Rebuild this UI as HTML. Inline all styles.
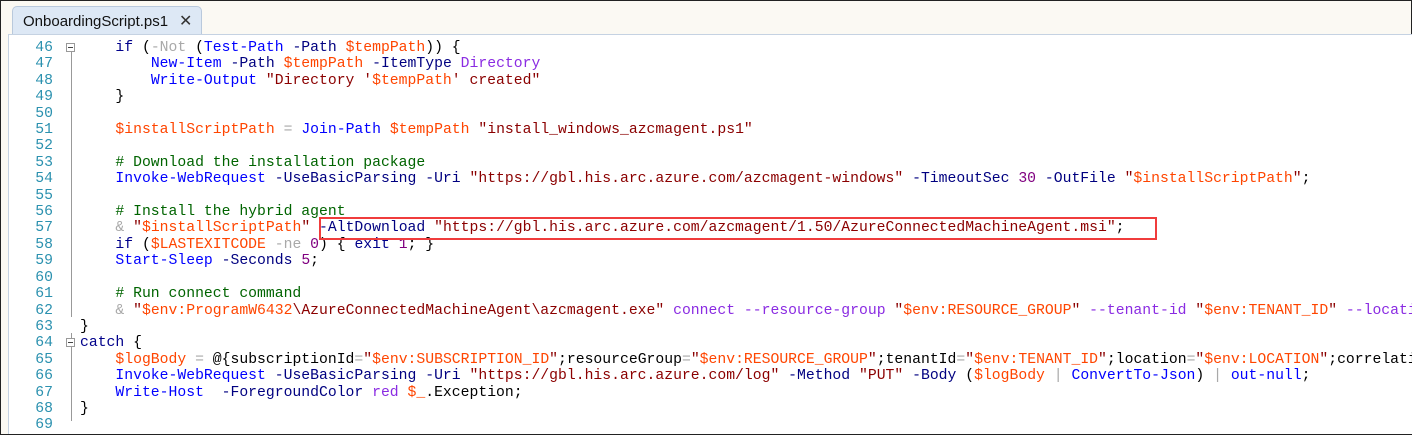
<!DOCTYPE html>
<html><head><meta charset="utf-8"><style>
body{margin:0;width:1412px;height:435px;overflow:hidden;background:#fbf9f3;position:relative;font-family:"Liberation Mono",monospace}
.frame{position:absolute;left:0;top:0;width:1410px;height:433px;border:1px solid #222;}
.tab{position:absolute;left:12px;top:6px;width:190px;height:28px;background:#dde8f5;border:1px solid #b9c9dc;border-bottom:none;border-radius:5px 5px 0 0;font-family:"Liberation Sans",sans-serif;font-size:15px;color:#111;line-height:30px;padding-left:10px;box-sizing:border-box}
.tab span{position:absolute;left:166px;font-size:16px;color:#333}
.ed{position:absolute;left:8px;top:34px;width:1403px;height:399px;background:#fff;border-top:1px solid #c5d2e2;border-left:1px solid #c5d2e2;overflow:hidden}
.nums{position:absolute;left:0;top:5px;width:44px;text-align:right;color:#2b91af;font-size:14.75px;line-height:16.4px;white-space:pre}
.code{position:absolute;left:71px;top:5px;font-size:14.75px;line-height:16.4px;white-space:pre;color:#000}
.gl{position:absolute;left:62px;width:1px;background:#999}
.box{position:absolute;left:57px;width:9px;height:9px;border:1px solid #999;background:#fff;box-sizing:border-box}
.box:after{content:"";position:absolute;left:1px;top:3px;width:5px;height:1px;background:#444}
.c{color:#0000ff}.p{color:#000080}.v{color:#ff4500}.s{color:#8b0000}.m{color:#006400}.o{color:#a9a9a9}.n{color:#800080}.k{color:#00008b}.t{color:#8a2be2}
.red{position:absolute;left:319px;top:217px;width:838px;height:23px;border:2px solid #f03c3c;box-sizing:border-box}
</style></head><body>
<div class="frame"></div>
<div class="tab">OnboardingScript.ps1<span>✕</span></div>
<div class="ed">
<div class="nums">46
47
48
49
50
51
52
53
54
55
56
57
58
59
60
61
62
63
64
65
66
67
68
69</div>
<div class="gl" style="top:12px;height:270px"></div>
<div class="gl" style="top:298px;height:88px"></div>
<div class="box" style="top:8px"></div>
<div class="box" style="top:303px"></div>
<div class="code">    <span class="k">if</span> (<span class="o">-Not</span> (<span class="c">Test-Path</span> <span class="p">-Path</span> <span class="v">$tempPath</span>)) {
        <span class="c">New-Item</span> <span class="p">-Path</span> <span class="v">$tempPath</span> <span class="p">-ItemType</span> <span class="t">Directory</span>
        <span class="c">Write-Output</span> <span class="s">"Directory '</span><span class="v">$tempPath</span><span class="s">' created"</span>
    }

    <span class="v">$installScriptPath</span> <span class="o">=</span> <span class="c">Join-Path</span> <span class="v">$tempPath</span> <span class="s">"install_windows_azcmagent.ps1"</span>

    <span class="m"># Download the installation package</span>
    <span class="c">Invoke-WebRequest</span> <span class="p">-UseBasicParsing</span> <span class="p">-Uri</span> <span class="s">"https://gbl.his.arc.azure.com/azcmagent-windows"</span> <span class="p">-TimeoutSec</span> <span class="n">30</span> <span class="p">-OutFile</span> <span class="s">"</span><span class="v">$installScriptPath</span><span class="s">"</span>;

    <span class="m"># Install the hybrid agent</span>
    <span class="o">&amp;</span> <span class="s">"</span><span class="v">$installScriptPath</span><span class="s">"</span> <span class="p">-AltDownload</span> <span class="s">"https://gbl.his.arc.azure.com/azcmagent/1.50/AzureConnectedMachineAgent.msi"</span>;
    <span class="k">if</span> (<span class="v">$LASTEXITCODE</span> <span class="o">-ne</span> <span class="n">0</span>) { <span class="k">exit</span> <span class="n">1</span>; }
    <span class="c">Start-Sleep</span> <span class="p">-Seconds</span> <span class="n">5</span>;

    <span class="m"># Run connect command</span>
    <span class="o">&amp;</span> <span class="s">"</span><span class="v">$env:ProgramW6432</span><span class="s">\AzureConnectedMachineAgent\azcmagent.exe"</span> <span class="t">connect</span> <span class="t">--resource-group</span> <span class="s">"</span><span class="v">$env:RESOURCE_GROUP</span><span class="s">"</span> <span class="t">--tenant-id</span> <span class="s">"</span><span class="v">$env:TENANT_ID</span><span class="s">"</span> <span class="t">--location</span>
}
<span class="k">catch</span> {
    <span class="v">$logBody</span> <span class="o">=</span> @{subscriptionId<span class="o">=</span><span class="s">"</span><span class="v">$env:SUBSCRIPTION_ID</span><span class="s">"</span>;resourceGroup<span class="o">=</span><span class="s">"</span><span class="v">$env:RESOURCE_GROUP</span><span class="s">"</span>;tenantId<span class="o">=</span><span class="s">"</span><span class="v">$env:TENANT_ID</span><span class="s">"</span>;location<span class="o">=</span><span class="s">"</span><span class="v">$env:LOCATION</span><span class="s">"</span>;correlationId
    <span class="c">Invoke-WebRequest</span> <span class="p">-UseBasicParsing</span> <span class="p">-Uri</span> <span class="s">"https://gbl.his.arc.azure.com/log"</span> <span class="p">-Method</span> <span class="s">"PUT"</span> <span class="p">-Body</span> (<span class="v">$logBody</span> <span class="o">|</span> <span class="c">ConvertTo-Json</span>) <span class="o">|</span> <span class="c">out-null</span>;
    <span class="c">Write-Host</span>  <span class="p">-ForegroundColor</span> <span class="t">red</span> <span class="v">$_</span>.Exception;
}
</div>
</div>
<div class="red"></div>
</body></html>
